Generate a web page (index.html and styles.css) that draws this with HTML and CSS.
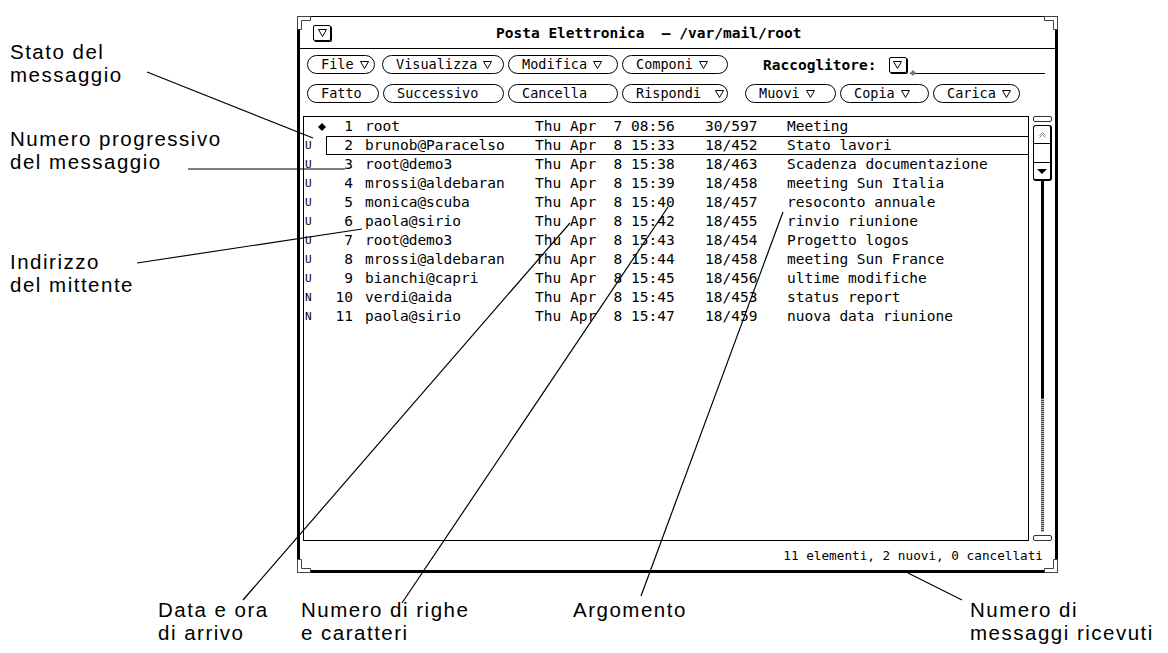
FILE: index.html
```html
<!DOCTYPE html>
<html lang="it">
<head>
<meta charset="utf-8">
<title>Posta Elettronica</title>
<link rel="stylesheet" href="styles.css">
</head>
<body>
<div class="canvas">
  <div class="window">
    <div class="titlebar">
      <span class="wmenu"><svg class="tri" viewBox="0 0 9 8"><polygon points="0.5,0.5 8.5,0.5 4.5,7.5"/></svg></span>
      <span class="title">Posta Elettronica  – /var/mail/root</span>
    </div>
    <div class="controls">
      <div class="ctl-row">
        <span class="btn b-file">File<svg class="tri" viewBox="0 0 9 8"><polygon points="0.5,0.5 8.5,0.5 4.5,7.5"/></svg></span>
        <span class="btn b-vis">Visualizza<svg class="tri" viewBox="0 0 9 8"><polygon points="0.5,0.5 8.5,0.5 4.5,7.5"/></svg></span>
        <span class="btn b-mod">Modifica<svg class="tri" viewBox="0 0 9 8"><polygon points="0.5,0.5 8.5,0.5 4.5,7.5"/></svg></span>
        <span class="btn b-comp">Componi<svg class="tri" viewBox="0 0 9 8"><polygon points="0.5,0.5 8.5,0.5 4.5,7.5"/></svg></span>
        <div class="racc">
          <span class="racc-label">Raccoglitore:</span>
          <span class="racc-box"><svg class="tri" viewBox="0 0 9 8"><polygon points="0.5,0.5 8.5,0.5 4.5,7.5"/></svg></span>
          <span class="racc-field"><svg class="racc-dia" viewBox="0 0 6 6"><polygon points="3,0 6,3 3,6 0,3"/></svg></span>
        </div>
      </div>
      <div class="ctl-row">
        <span class="btn b-fatto">Fatto</span>
        <span class="btn b-succ">Successivo</span>
        <span class="btn b-canc">Cancella</span>
        <span class="btn b-risp">Rispondi <svg class="tri" viewBox="0 0 9 8"><polygon points="0.5,0.5 8.5,0.5 4.5,7.5"/></svg></span>
        <span class="btn b-muovi">Muovi<svg class="tri" viewBox="0 0 9 8"><polygon points="0.5,0.5 8.5,0.5 4.5,7.5"/></svg></span>
        <span class="btn b-copia">Copia<svg class="tri" viewBox="0 0 9 8"><polygon points="0.5,0.5 8.5,0.5 4.5,7.5"/></svg></span>
        <span class="btn b-carica">Carica<svg class="tri" viewBox="0 0 9 8"><polygon points="0.5,0.5 8.5,0.5 4.5,7.5"/></svg></span>
      </div>
    </div>
    <div class="main">
      <div class="list">
        <div class="row"><span class="st"></span><span class="mk"><svg class="dia" viewBox="0 0 8 8"><polygon points="4,0 8,4 4,8 0,4"/></svg></span><span class="entry"><span class="num">1</span><span class="from">root</span><span class="date">Thu Apr  7 08:56</span><span class="size">30/597</span><span class="subj">Meeting</span></span></div>
        <div class="row"><span class="st">U</span><span class="mk"></span><span class="entry sel"><span class="num">2</span><span class="from">brunob@Paracelso</span><span class="date">Thu Apr  8 15:33</span><span class="size">18/452</span><span class="subj">Stato lavori</span></span></div>
        <div class="row"><span class="st">U</span><span class="mk"></span><span class="entry"><span class="num">3</span><span class="from">root@demo3</span><span class="date">Thu Apr  8 15:38</span><span class="size">18/463</span><span class="subj">Scadenza documentazione</span></span></div>
        <div class="row"><span class="st">U</span><span class="mk"></span><span class="entry"><span class="num">4</span><span class="from">mrossi@aldebaran</span><span class="date">Thu Apr  8 15:39</span><span class="size">18/458</span><span class="subj">meeting Sun Italia</span></span></div>
        <div class="row"><span class="st">U</span><span class="mk"></span><span class="entry"><span class="num">5</span><span class="from">monica@scuba</span><span class="date">Thu Apr  8 15:40</span><span class="size">18/457</span><span class="subj">resoconto annuale</span></span></div>
        <div class="row"><span class="st">U</span><span class="mk"></span><span class="entry"><span class="num">6</span><span class="from">paola@sirio</span><span class="date">Thu Apr  8 15:42</span><span class="size">18/455</span><span class="subj">rinvio riunione</span></span></div>
        <div class="row"><span class="st">U</span><span class="mk"></span><span class="entry"><span class="num">7</span><span class="from">root@demo3</span><span class="date">Thu Apr  8 15:43</span><span class="size">18/454</span><span class="subj">Progetto logos</span></span></div>
        <div class="row"><span class="st">U</span><span class="mk"></span><span class="entry"><span class="num">8</span><span class="from">mrossi@aldebaran</span><span class="date">Thu Apr  8 15:44</span><span class="size">18/458</span><span class="subj">meeting Sun France</span></span></div>
        <div class="row"><span class="st">U</span><span class="mk"></span><span class="entry"><span class="num">9</span><span class="from">bianchi@capri</span><span class="date">Thu Apr  8 15:45</span><span class="size">18/456</span><span class="subj">ultime modifiche</span></span></div>
        <div class="row"><span class="st">N</span><span class="mk"></span><span class="entry"><span class="num">10</span><span class="from">verdi@aida</span><span class="date">Thu Apr  8 15:45</span><span class="size">18/453</span><span class="subj">status report</span></span></div>
        <div class="row"><span class="st">N</span><span class="mk"></span><span class="entry"><span class="num">11</span><span class="from">paola@sirio</span><span class="date">Thu Apr  8 15:47</span><span class="size">18/459</span><span class="subj">nuova data riunione</span></span></div>
      </div>
      <div class="scroll">
        <span class="anchor"></span>
        <span class="elevator">
          <span class="el-up"><svg class="up" viewBox="0 0 7 6"><polyline points="0.5,3.5 3.5,0.5 6.5,3.5"/><polyline points="0.5,5.5 3.5,2.5 6.5,5.5"/></svg></span>
          <span class="el-mid"></span>
          <span class="el-down"><svg class="down" viewBox="0 0 10 5"><polygon points="0,0 10,0 5,5"/></svg></span>
        </span>
        <span class="cable"></span>
        <span class="cable-rest"></span>
        <span class="anchor anchor-bottom"></span>
      </div>
    </div>
    <div class="footer">11 elementi, 2 nuovi, 0 cancellati</div>

    <svg class="corner c-tl" viewBox="0 0 14 14"><path d="M0.5,0.5 H13.5 V4.5 H4.5 V13.5 H0.5 Z"/></svg>
    <svg class="corner c-tr" viewBox="0 0 14 14"><path d="M0.5,0.5 H13.5 V13.5 H9.5 V4.5 H0.5 Z"/></svg>
    <svg class="corner c-bl" viewBox="0 0 14 14"><path d="M0.5,0.5 H4.5 V9.5 H13.5 V13.5 H0.5 Z"/></svg>
    <svg class="corner c-br" viewBox="0 0 14 14"><path d="M9.5,0.5 H13.5 V13.5 H0.5 V9.5 H9.5 Z"/></svg>
  </div>

  <div class="label l-stato">Stato del<br>messaggio</div>
  <div class="label l-num">Numero progressivo<br>del messaggio</div>
  <div class="label l-ind">Indirizzo<br>del mittente</div>
  <div class="label l-data">Data e ora<br>di arrivo</div>
  <div class="label l-righe">Numero di righe<br>e caratteri</div>
  <div class="label l-arg">Argomento</div>
  <div class="label l-ric">Numero di<br>messaggi ricevuti</div>

  <svg class="leaders" viewBox="0 0 1168 653">
    <line x1="147" y1="72" x2="313" y2="138"/>
    <line x1="188" y1="169" x2="345" y2="169"/>
    <line x1="137" y1="263" x2="362" y2="229"/>
    <line x1="243" y1="600" x2="570" y2="223"/>
    <line x1="402" y1="603" x2="668" y2="207"/>
    <line x1="641" y1="596" x2="783" y2="212"/>
    <line x1="908" y1="573" x2="962" y2="600"/>
  </svg>
</div>
</body>
</html>
```

FILE: styles.css
```css
* { box-sizing: border-box; }

body {
  margin: 0;
  background: #fff;
}

.canvas {
  position: relative;
  width: 1168px;
  height: 653px;
  overflow: hidden;
  padding: 16px 0 0 297px;
  font-family: "DejaVu Sans Mono", monospace;
  color: #000;
  background: #fff;
}

/* ---------- window ---------- */
.window {
  position: relative;
  width: 761px;
  height: 557px;
  border: 3px solid #000;
  border-top-width: 1px;
  display: flex;
  flex-direction: column;
  background: #fff;
}

.titlebar {
  height: 32px;
  flex: none;
  border-bottom: 1px solid #000;
  display: flex;
  align-items: center;
}

.wmenu {
  margin-left: 13px;
  width: 18px;
  height: 16px;
  border: 1px solid #000;
  border-radius: 2px;
  box-shadow: 1px 1px 0 #000;
  display: flex;
  align-items: center;
  justify-content: center;
}

.tri {
  width: 9px;
  height: 8px;
  flex: none;
}
.tri polygon {
  fill: none;
  stroke: #000;
  stroke-width: 1;
}

.title {
  margin-left: 165px;
  font-weight: bold;
  font-size: 14.5px;
  white-space: pre;
}

/* ---------- controls ---------- */
.controls {
  flex: none;
  padding: 6px 0 0 7px;
  display: flex;
  flex-direction: column;
  gap: 10px;
}

.ctl-row {
  display: flex;
  align-items: center;
  gap: 4px;
  height: 19px;
}

.btn {
  height: 19px;
  flex: none;
  border: 1px solid #000;
  border-radius: 10px;
  padding-left: 13px;
  font-size: 13.5px;
  line-height: 17px;
  white-space: pre;
  display: flex;
  align-items: center;
}
.btn .tri { margin-left: 6px; }

.b-file { width: 68px; margin-right: 3px; }
.b-vis { width: 122px; }
.b-mod { width: 110px; }
.b-comp { width: 106px; }
.b-fatto { width: 72px; }
.b-succ { width: 121px; }
.b-canc { width: 110px; }
.b-risp { width: 106px; }
.b-muovi { width: 91px; margin-left: 13px; }
.b-copia { width: 89px; }
.b-carica { width: 87px; }

.racc {
  margin-left: 31px;
  display: flex;
  align-items: center;
  height: 19px;
}
.racc-label {
  font-weight: bold;
  font-size: 14.5px;
}
.racc-box {
  margin-left: 12px;
  width: 18px;
  height: 16px;
  border: 1px solid #000;
  border-radius: 2px;
  box-shadow: 1px 1px 0 #000;
  display: flex;
  align-items: center;
  justify-content: center;
}
.racc-field {
  align-self: flex-end;
  margin-left: 3px;
  width: 135px;
  height: 3px;
  border-bottom: 1px solid #000;
  position: relative;
}
.racc-dia {
  position: absolute;
  left: 0;
  bottom: -3px;
  width: 6px;
  height: 6px;
}
.racc-dia polygon { fill: #777; }

/* ---------- list ---------- */
.main {
  flex: none;
  margin-top: 13px;
  display: flex;
  height: 425px;
}

.list {
  margin-left: 3px;
  width: 726px;
  height: 425px;
  border: 1px solid #000;
}

.row {
  display: flex;
  height: 19px;
  font-size: 14.5px;
}

.st {
  width: 13px;
  flex: none;
  padding-left: 1px;
  font-size: 11px;
  line-height: 19px;
}

.mk {
  width: 9px;
  flex: none;
  display: flex;
  align-items: center;
  justify-content: center;
}
.dia {
  width: 8px;
  height: 8px;
}
.dia polygon { fill: #000; }

.entry {
  flex: 1;
  display: flex;
  border: 1px solid transparent;
  border-right: 0;
  line-height: 17px;
  white-space: pre;
}
.entry.sel {
  border-color: #000;
}

.num { width: 26px; text-align: right; flex: none; }
.from { margin-left: 12px; width: 170px; flex: none; }
.date { width: 170px; flex: none; }
.size { width: 82px; flex: none; }
.subj { flex: 1; }

/* ---------- scrollbar ---------- */
.scroll {
  width: 26px;
  flex: none;
  padding-left: 4px;
  display: flex;
  flex-direction: column;
  align-items: flex-start;
}

.anchor {
  width: 19px;
  height: 6px;
  border: 1px solid #333;
  border-radius: 2px;
  flex: none;
}
.anchor-bottom { margin-top: 3px; }

.elevator {
  margin-top: 3px;
  width: 19px;
  height: 56px;
  border: 1px solid #000;
  border-right-width: 2px;
  border-bottom-width: 2px;
  border-radius: 3px;
  display: flex;
  flex-direction: column;
  flex: none;
}
.el-up, .el-mid, .el-down {
  display: flex;
  align-items: center;
  justify-content: center;
}
.el-up { height: 18px; border-bottom: 1px solid #000; }
.el-mid { height: 19px; border-bottom: 1px solid #000; }
.el-down { flex: 1; }
.up { width: 7px; height: 6px; }
.up polyline { fill: none; stroke: #888; stroke-width: 1; }
.down { width: 10px; height: 5px; }
.down polygon { fill: #000; }

.cable {
  margin-left: 8px;
  width: 3px;
  height: 217px;
  background: #000;
  flex: none;
}
.cable-rest {
  margin-left: 8px;
  width: 3px;
  height: 134px;
  flex: none;
  background: repeating-linear-gradient(to bottom, #444 0 1px, #bbb 1px 2px);
}

/* ---------- footer ---------- */
.footer {
  flex: 1;
  padding-right: 12px;
  text-align: right;
  font-size: 12.7px;
  line-height: 29px;
  white-space: pre;
}

/* ---------- window corners ---------- */
.corner {
  position: absolute;
  width: 14px;
  height: 14px;
}
.corner path {
  fill: #fff;
  stroke: #444;
  stroke-width: 1;
}
.c-tl { left: -3px; top: -1px; }
.c-tr { right: -3px; top: -1px; }
.c-bl { left: -3px; bottom: -3px; }
.c-br { right: -3px; bottom: -3px; }

/* ---------- callout labels ---------- */
.label {
  position: absolute;
  font-family: "Liberation Sans", Arial, sans-serif;
  font-size: 20.5px;
  line-height: 23px;
  letter-spacing: 1.5px;
  color: #000;
  white-space: nowrap;
}
.l-stato { left: 10px; top: 40px; }
.l-num { left: 10px; top: 127px; }
.l-ind { left: 10px; top: 250px; }
.l-data { left: 158px; top: 598px; }
.l-righe { left: 301px; top: 598px; }
.l-arg { left: 573px; top: 598px; }
.l-ric { left: 970px; top: 598px; }

.leaders {
  position: absolute;
  left: 0;
  top: 0;
  width: 1168px;
  height: 653px;
  pointer-events: none;
}
.leaders line {
  stroke: #000;
  stroke-width: 1.2;
}
```
